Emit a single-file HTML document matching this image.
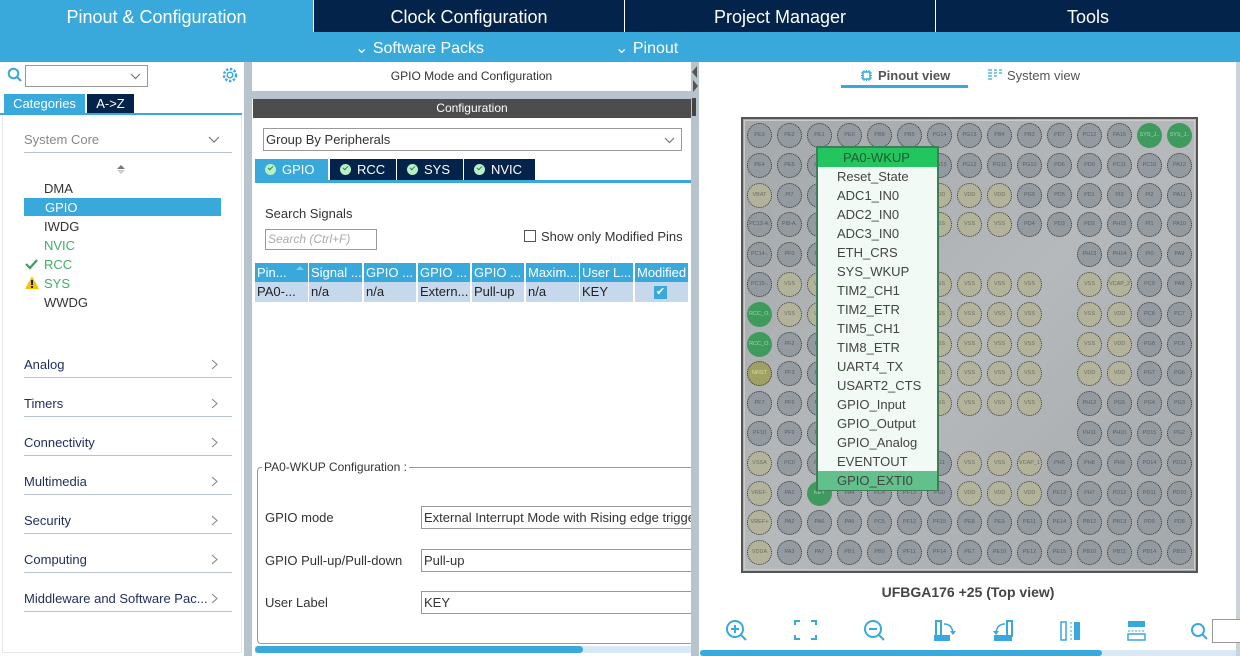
<!DOCTYPE html>
<html><head><meta charset="utf-8">
<style>
*{margin:0;padding:0;box-sizing:border-box}
body{width:1240px;height:656px;overflow:hidden;background:#fff;font-family:"Liberation Sans",sans-serif;position:relative;color:#333}
.a{position:absolute}
.top{left:0;top:0;width:1240px;height:32px;background:#03234b}
.tt{top:0;height:32px;line-height:34px;color:#fff;font-size:18px;text-align:center}
.sub{left:0;top:32px;width:1240px;height:30px;background:#39a9dc;color:#fff;font-size:16px}
.gbar{background:#b8c4cc}
.cat{left:24px;width:208px;height:26px;font-size:13px;color:#1f2d5c;border-bottom:1.5px solid #b8c4cc}
.cat span{position:absolute;left:0;bottom:5px}
.cat svg{position:absolute;right:14px;bottom:7px}
.it{left:44px;font-size:13px;color:#333}
.th{top:263px;height:19px;background:#39a9dc;color:#fff;font-size:13px;line-height:19px;padding-left:2px;white-space:nowrap;overflow:hidden}
.td{top:282px;height:20px;background:#c6d9ec;font-size:13px;line-height:20px;padding-left:2px;white-space:nowrap;overflow:hidden;color:#222}
.tab{top:159px;height:21px;background:#03234b;color:#fff;font-size:13px;line-height:21px}
.tab i{display:inline-block;width:11px;height:11px;border-radius:50%;background:#b8f0c8;margin:0 6px 0 10px;vertical-align:-1px;position:relative}
.tab i:after{content:"";position:absolute;left:3px;top:2px;width:4px;height:2px;border-left:1.5px solid #2a8a4a;border-bottom:1.5px solid #2a8a4a;transform:rotate(-45deg)}
.inp{border:1px solid #999;height:23px;font-size:13px;line-height:21px;padding-left:2px;background:#fff;white-space:nowrap;overflow:hidden}
.lbl{font-size:13px;color:#333}
.chip{left:741px;top:117px;width:457px;height:456px;border:2px solid #555;background:linear-gradient(135deg,#a4a9ac,#b6b9bb 50%,#a3a8ab);outline:1px solid #ccc;outline-offset:-4px}
.grid{left:745px;top:121px;display:grid;grid-template-columns:repeat(15,30px);grid-auto-rows:29.8px}
.grid i{display:block;width:25px;height:25px;margin:2px;border-radius:50%;border:1px dotted #333;background:#939aa0;font-style:normal;font-size:5.5px;color:#5a5f64;text-align:center;line-height:23px;overflow:hidden;white-space:nowrap}
.grid i.p{background:#b3b39c;color:#6d6d5d}
.grid i.n{background:#3f9a5d;color:#9fd6b0;border-color:#3f9a5d}
.grid i.o{background:#9fa064;color:#dede9f}
.grid i.e{visibility:hidden}
.pop{left:816px;top:146px;width:123px;height:345px;border:2px solid #3f7d57;background:#f1faf4}
.pop div{height:19px;line-height:19px;font-size:13px;color:#444;padding-left:19px}
</style></head><body>
<div class="a top"></div>
<div class="a tt" style="left:0;width:313px;background:#39a9dc">Pinout &amp; Configuration</div>
<div class="a tt" style="left:313px;width:311px;border-left:1px solid #fff">Clock Configuration</div>
<div class="a tt" style="left:624px;width:311px;border-left:1px solid #fff">Project Manager</div>
<div class="a tt" style="left:935px;width:305px;border-left:1px solid #fff">Tools</div>
<div class="a sub"><span class="a" style="left:355px;top:6px">⌄ Software Packs</span><span class="a" style="left:615px;top:6px">⌄ Pinout</span></div>

<div class="a gbar" style="left:244px;top:62px;width:8px;height:594px"></div>
<div class="a gbar" style="left:691px;top:62px;width:8px;height:594px"></div>
<div class="a" style="left:692px;top:66px;width:0;height:0;border-right:5px solid #555;border-top:6px solid transparent;border-bottom:6px solid transparent"></div>
<div class="a" style="left:693px;top:80px;width:0;height:0;border-left:5px solid #555;border-top:6px solid transparent;border-bottom:6px solid transparent"></div>
<div class="a" style="left:692px;top:98px;width:4px;height:18px;background:#444"></div>
<div class="a gbar" style="left:1236px;top:62px;width:4px;height:594px;background:#ccd3d8"></div>
<svg class="a" style="left:7px;top:67px" width="16" height="16"><circle cx="6.5" cy="6.5" r="4.8" fill="none" stroke="#39a9dc" stroke-width="2"/><line x1="10" y1="10" x2="14" y2="14" stroke="#39a9dc" stroke-width="2.2"/></svg>
<div class="a inp" style="left:25px;top:65px;width:123px;height:22px"><svg class="a" style="right:6px;top:7px" width="11" height="7"><polyline points="1,1 5.5,5.5 10,1" fill="none" stroke="#777" stroke-width="1.2"/></svg></div>
<svg class="a" style="left:221px;top:66px" width="18" height="18"><circle cx="9" cy="9" r="6" fill="none" stroke="#39a9dc" stroke-width="2.4" stroke-dasharray="2.4 1.6"/><circle cx="9" cy="9" r="2.8" fill="none" stroke="#39a9dc" stroke-width="1.5"/></svg>
<div class="a" style="left:4px;top:94px;width:81px;height:19px;background:#39a9dc;color:#fff;font-size:13px;line-height:19px;text-align:center">Categories</div>
<div class="a" style="left:87px;top:94px;width:47px;height:19px;background:#03234b;color:#fff;font-size:13px;line-height:19px;text-align:center">A-&gt;Z</div>
<div class="a" style="left:0;top:113px;width:242px;height:2px;background:#39a9dc"></div>
<div class="a" style="left:2px;top:115px;width:240px;height:538px;border:1px solid #e4e8eb;border-top:0"></div>
<div class="a cat" style="top:127px"><span style="color:#888">System Core</span><svg style="right:12px;bottom:9px" width="12" height="7"><polyline points="1,1 6,6 11,1" fill="none" stroke="#777" stroke-width="1.2"/></svg></div>
<div class="a" style="left:117px;top:165px;border-bottom:4px solid #777;border-left:4px solid transparent;border-right:4px solid transparent"></div>
<div class="a" style="left:117px;top:170px;border-top:4px solid #ccc;border-left:4px solid transparent;border-right:4px solid transparent"></div>
<div class="a it" style="top:181px">DMA</div>
<div class="a" style="left:24px;top:198px;width:197px;height:18px;background:#39a9dc"></div>
<div class="a it" style="top:200px;left:45px;color:#fff">GPIO</div>
<div class="a it" style="top:219px">IWDG</div>
<div class="a it" style="top:238px;color:#3cae6a">NVIC</div>
<div class="a it" style="top:257px;color:#3cae6a">RCC</div>
<svg class="a" style="left:25px;top:259px" width="13" height="11"><polyline points="1,5 5,9 12,1" fill="none" stroke="#3a9f5f" stroke-width="2.2"/></svg>
<div class="a it" style="top:276px;color:#3cae6a">SYS</div>
<div class="a" style="left:25px;top:276px;border-bottom:13px solid #f5c400;border-left:7px solid transparent;border-right:7px solid transparent"></div>
<div class="a" style="left:31px;top:280px;width:2px;height:5px;background:#222"></div>
<div class="a" style="left:31px;top:286px;width:2px;height:2px;background:#222"></div>
<div class="a it" style="top:295px">WWDG</div>
<div class="a cat" style="top:352px"><span>Analog</span><svg width="7" height="11"><polyline points="1,1 6,5.5 1,10" fill="none" stroke="#888" stroke-width="1.1"/></svg></div>
<div class="a cat" style="top:391px"><span>Timers</span><svg width="7" height="11"><polyline points="1,1 6,5.5 1,10" fill="none" stroke="#888" stroke-width="1.1"/></svg></div>
<div class="a cat" style="top:430px"><span>Connectivity</span><svg width="7" height="11"><polyline points="1,1 6,5.5 1,10" fill="none" stroke="#888" stroke-width="1.1"/></svg></div>
<div class="a cat" style="top:469px"><span>Multimedia</span><svg width="7" height="11"><polyline points="1,1 6,5.5 1,10" fill="none" stroke="#888" stroke-width="1.1"/></svg></div>
<div class="a cat" style="top:508px"><span>Security</span><svg width="7" height="11"><polyline points="1,1 6,5.5 1,10" fill="none" stroke="#888" stroke-width="1.1"/></svg></div>
<div class="a cat" style="top:547px"><span>Computing</span><svg width="7" height="11"><polyline points="1,1 6,5.5 1,10" fill="none" stroke="#888" stroke-width="1.1"/></svg></div>
<div class="a cat" style="top:586px"><span>Middleware and Software Pac...</span><svg width="7" height="11"><polyline points="1,1 6,5.5 1,10" fill="none" stroke="#888" stroke-width="1.1"/></svg></div>

<div class="a" style="left:252px;top:62px;width:439px;height:29px;text-align:center;line-height:29px;font-size:12px;color:#333">GPIO Mode and Configuration</div>
<div class="a gbar" style="left:252px;top:91px;width:439px;height:8px"></div>
<div class="a" style="left:253px;top:99px;width:438px;height:19px;background:#4d4d4d;color:#fff;text-align:center;font-size:12px;line-height:19px">Configuration</div>
<div class="a inp" style="left:263px;top:128px;width:419px;height:23px;font-size:13px">Group By Peripherals<svg class="a" style="right:6px;top:8px" width="11" height="7"><polyline points="1,1 5.5,5.5 10,1" fill="none" stroke="#777" stroke-width="1.2"/></svg></div>
<div class="a tab" style="left:255px;width:73px;background:#39a9dc"><i></i>GPIO</div>
<div class="a tab" style="left:330px;width:66px"><i></i>RCC</div>
<div class="a tab" style="left:397px;width:66px"><i></i>SYS</div>
<div class="a tab" style="left:464px;width:71px"><i></i>NVIC</div>
<div class="a" style="left:255px;top:180px;width:436px;height:3px;background:#39a9dc"></div>
<div class="a lbl" style="left:265px;top:206px">Search Signals</div>
<div class="a inp" style="left:265px;top:229px;width:112px;height:21px;font-style:italic;color:#aaa;font-size:12px;line-height:19px">Search (Ctrl+F)</div>
<div class="a" style="left:524px;top:230px;width:12px;height:12px;border:1px solid #555"></div>
<div class="a lbl" style="left:541px;top:229px">Show only Modified Pins</div>
<div class="a th" style="left:255px;width:53px">Pin...</div>
<div class="a" style="left:296px;top:266px;border-bottom:4px solid #8fc5e6;border-left:4px solid transparent;border-right:4px solid transparent"></div>
<div class="a th" style="left:309px;width:53px">Signal ...</div>
<div class="a th" style="left:364px;width:52px">GPIO ...</div>
<div class="a th" style="left:418px;width:52px">GPIO ...</div>
<div class="a th" style="left:472px;width:52px">GPIO ...</div>
<div class="a th" style="left:526px;width:53px">Maxim...</div>
<div class="a th" style="left:580px;width:53px">User L...</div>
<div class="a th" style="left:635px;width:53px">Modified</div>
<div class="a td" style="left:255px;width:53px">PA0-...</div>
<div class="a td" style="left:309px;width:53px">n/a</div>
<div class="a td" style="left:364px;width:52px">n/a</div>
<div class="a td" style="left:418px;width:52px">Extern...</div>
<div class="a td" style="left:472px;width:52px">Pull-up</div>
<div class="a td" style="left:526px;width:53px">n/a</div>
<div class="a td" style="left:580px;width:53px">KEY</div>
<div class="a td" style="left:635px;width:53px"><span class="a" style="left:19px;top:4px;width:13px;height:13px;background:#39a9dc;color:#fff;font-size:11px;line-height:13px;text-align:center">✔</span></div>
<div class="a" style="left:257px;top:467px;width:440px;height:177px;border:1px solid #999;border-radius:4px;border-right:0"></div>
<div class="a lbl" style="left:262px;top:460px;background:#fff;padding:0 2px;font-size:12px">PA0-WKUP Configuration :</div>
<div class="a lbl" style="left:265px;top:510px">GPIO mode</div>
<div class="a inp" style="left:421px;top:506px;width:275px">External Interrupt Mode with Rising edge trigger detection</div>
<div class="a lbl" style="left:265px;top:553px">GPIO Pull-up/Pull-down</div>
<div class="a inp" style="left:421px;top:549px;width:275px">Pull-up</div>
<div class="a lbl" style="left:265px;top:595px">User Label</div>
<div class="a inp" style="left:421px;top:591px;width:275px">KEY</div>
<div class="a" style="left:691px;top:460px;width:8px;height:196px;background:#b8c4cc"></div>
<div class="a" style="left:255px;top:646px;width:436px;height:7px;background:#d8e8f5"></div>
<div class="a" style="left:255px;top:646px;width:328px;height:7px;background:#39a9dc;border-radius:4px"></div>

<svg class="a" style="left:860px;top:69px" width="13" height="13"><rect x="3" y="3" width="7" height="7" fill="none" stroke="#39a9dc" stroke-width="1.5"/><path d="M1 4h2M1 6.5h2M1 9h2M10 4h2M10 6.5h2M10 9h2M4 1v2M6.5 1v2M9 1v2M4 10v2M6.5 10v2M9 10v2" stroke="#39a9dc"/></svg>
<div class="a" style="left:878px;top:68px;font-size:13px;font-weight:bold;color:#555">Pinout view</div>
<div class="a" style="left:841px;top:85px;width:127px;height:3px;background:#39a9dc"></div>
<svg class="a" style="left:988px;top:69px" width="14" height="11"><path d="M0 1h4M0 4h4M0 7h4M0 10h4M6 1h3M6 4h3M6 7h3M11 1h3M11 4h3" stroke="#39a9dc" stroke-width="1.2"/></svg>
<div class="a" style="left:1007px;top:68px;font-size:13px;color:#555">System view</div>
<div class="a chip"></div>
<div class="a grid">
<i>PE3</i><i>PE2</i><i>PE1</i><i>PE0</i><i>PB8</i><i>PB5</i><i>PG14</i><i>PG13</i><i>PB4</i><i>PB3</i><i>PD7</i><i>PC12</i><i>PA15</i><i class="n">SYS_J..</i><i class="n">SYS_J..</i>
<i>PE4</i><i>PE5</i><i>PE6</i><i>PB9</i><i>PB7</i><i>PB6</i><i>PG15</i><i>PG12</i><i>PG11</i><i>PG10</i><i>PD6</i><i>PD0</i><i>PC11</i><i>PC10</i><i>PA12</i>
<i class="p">VBAT</i><i>PI7</i><i>PI6</i><i>PI5</i><i>PI4</i><i class="p">VDD</i><i class="p">VDD</i><i class="p">VDD</i><i class="p">VDD</i><i>PG9</i><i>PD5</i><i>PD1</i><i>PI3</i><i>PI2</i><i>PA11</i>
<i>PC13-A.</i><i>PI8-A.</i><i>PI9</i><i>PI10</i><i>PI11</i><i class="p">VSS</i><i class="p">VSS</i><i class="p">VSS</i><i class="p">VSS</i><i>PD4</i><i>PD3</i><i>PD2</i><i>PH15</i><i>PI1</i><i>PA10</i>
<i>PC14-.</i><i>PF0</i><i>PF1</i><i>PF2</i><i>PI12</i><i>PH2</i><i class="e"></i><i class="e"></i><i class="e"></i><i class="e"></i><i class="e"></i><i>PH13</i><i>PH14</i><i>PI0</i><i>PA9</i>
<i>PC15-.</i><i class="p">VSS</i><i class="p">VDD</i><i>PF3</i><i>PH3</i><i>PH4</i><i class="p">VSS</i><i class="p">VSS</i><i class="p">VSS</i><i class="p">VSS</i><i class="e"></i><i class="p">VSS</i><i class="p">VCAP_2</i><i>PC9</i><i>PA8</i>
<i class="n">RCC_O.</i><i class="p">VSS</i><i class="p">VDD</i><i>PF4</i><i>PH5</i><i>PH1</i><i class="p">VSS</i><i class="p">VSS</i><i class="p">VSS</i><i class="p">VSS</i><i class="e"></i><i class="p">VSS</i><i class="p">VDD</i><i>PC8</i><i>PC7</i>
<i class="n">RCC_O.</i><i>PF2</i><i>PF5</i><i>PF6</i><i>PH0</i><i>PI13</i><i class="p">VSS</i><i class="p">VSS</i><i class="p">VSS</i><i class="p">VSS</i><i class="e"></i><i class="p">VSS</i><i class="p">VDD</i><i>PG8</i><i>PC6</i>
<i class="o">NRST</i><i>PF3</i><i>PF4</i><i>PF8</i><i>PI14</i><i>PI15</i><i class="p">VSS</i><i class="p">VSS</i><i class="p">VSS</i><i class="p">VSS</i><i class="e"></i><i class="p">VDD</i><i class="p">VDD</i><i>PG7</i><i>PG6</i>
<i>PF7</i><i>PF6</i><i>PF5</i><i>PC1</i><i>PC2</i><i>PC3</i><i class="p">VSS</i><i class="p">VSS</i><i class="p">VSS</i><i class="p">VSS</i><i class="e"></i><i>PH12</i><i>PG5</i><i>PG4</i><i>PG3</i>
<i>PF10</i><i>PF9</i><i>PF8</i><i>PA0</i><i>PA5</i><i>PB2</i><i class="e"></i><i class="e"></i><i class="e"></i><i class="e"></i><i class="e"></i><i>PH11</i><i>PH10</i><i>PD15</i><i>PG2</i>
<i class="p">VSSA</i><i>PC0</i><i>PC1</i><i>PC2</i><i>PC3</i><i>PB2</i><i>PG1</i><i class="p">VSS</i><i class="p">VSS</i><i class="p">VCAP_1</i><i>PH6</i><i>PH8</i><i>PH9</i><i>PD14</i><i>PD13</i>
<i class="p">VREF-</i><i>PA1</i><i class="n">KEY</i><i>PA4</i><i>PC4</i><i>PF13</i><i>PG0</i><i class="p">VDD</i><i class="p">VDD</i><i class="p">VDD</i><i>PE13</i><i>PH7</i><i>PD12</i><i>PD11</i><i>PD10</i>
<i class="p">VREF+</i><i>PA2</i><i>PA6</i><i>PA5</i><i>PC5</i><i>PF12</i><i>PF15</i><i>PE8</i><i>PE9</i><i>PE11</i><i>PE14</i><i>PB12</i><i>PB13</i><i>PD9</i><i>PD8</i>
<i class="p">VDDA</i><i>PA3</i><i>PA7</i><i>PB1</i><i>PB0</i><i>PF11</i><i>PF14</i><i>PE7</i><i>PE10</i><i>PE12</i><i>PE15</i><i>PB10</i><i>PB11</i><i>PB14</i><i>PB15</i>
</div>
<div class="a pop">
<div style="background:#22c55e;color:#1d5a33;padding-left:25px">PA0-WKUP</div>
<div>Reset_State</div><div>ADC1_IN0</div><div>ADC2_IN0</div><div>ADC3_IN0</div><div>ETH_CRS</div><div>SYS_WKUP</div><div>TIM2_CH1</div><div>TIM2_ETR</div><div>TIM5_CH1</div><div>TIM8_ETR</div><div>UART4_TX</div><div>USART2_CTS</div><div>GPIO_Input</div><div>GPIO_Output</div><div>GPIO_Analog</div><div>EVENTOUT</div>
<div style="background:#62c08a">GPIO_EXTI0</div>
</div>
<div class="a" style="left:700px;top:584px;width:536px;text-align:center;font-size:14px;font-weight:bold;color:#444">UFBGA176 +25 (Top view)</div>

<svg class="a" style="left:700px;top:615px" width="540" height="32" fill="none" stroke="#39a9dc" stroke-width="2">
<circle cx="35" cy="14" r="8"/><line x1="41" y1="20" x2="46" y2="25"/><path d="M31 14h8M35 10v8"/>
<path d="M95 10v-4h5M111 6h5v4M116 20v4h-5M100 24h-5v-4"/>
<circle cx="173" cy="14" r="8"/><line x1="179" y1="20" x2="184" y2="25"/><path d="M169 14h8"/>
<path d="M236 22v-16h5v16"/><rect x="234" y="20" width="16" height="6" fill="#39a9dc" stroke="none"/><path d="M244 9q8 0 9 9" stroke-width="1.5"/><path d="M250 16l3 4 3-4" fill="#39a9dc" stroke="none"/>
<path d="M312 22v-16h-5v16"/><rect x="294" y="20" width="18" height="6" fill="#39a9dc" stroke="none"/><path d="M305 9q-8 0-9 9" stroke-width="1.5"/><path d="M293 16l3 4 3-4" fill="#39a9dc" stroke="none"/>
<rect x="361" y="7" width="5" height="18" stroke-width="1.5"/><path d="M371 7v18" stroke-width="1" stroke-dasharray="2 2"/><rect x="374" y="7" width="6" height="18" fill="#39a9dc" stroke="none"/>
<rect x="428" y="6" width="17" height="6" fill="#39a9dc" stroke="none"/><path d="M428 16h17" stroke-width="1" stroke-dasharray="2 1.5"/><rect x="428" y="19" width="17" height="6" stroke-width="1.5"/>
<circle cx="498" cy="15" r="6"/><line x1="502" y1="19" x2="507" y2="24"/>
</svg>
<div class="a" style="left:1212px;top:619px;width:28px;height:24px;border:1px solid #999;border-right:0;background:#fff"></div>
<div class="a" style="left:700px;top:650px;width:536px;height:6px;background:#d8e8f5"></div>
<div class="a" style="left:700px;top:650px;width:402px;height:6px;background:#39a9dc;border-radius:3px"></div>
</body></html>
